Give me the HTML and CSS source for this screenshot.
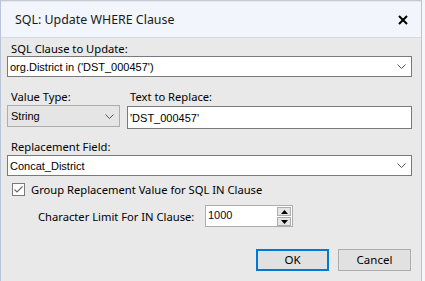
FILE: index.html
```html
<!DOCTYPE html>
<html>
<head>
<meta charset="utf-8">
<link rel="stylesheet" href="styles.css">
</head>
<body>
<div class="window">
  <div class="titlebar">
    <span class="title">SQL: Update WHERE Clause</span>
    <svg class="close" width="10" height="10" viewBox="0 0 10 10"><path d="M1 1 L9 9 M9 1 L1 9" stroke="#000" stroke-width="2"/></svg>
  </div>
  <div class="content">
    <div class="label l1">SQL Clause to Update:</div>
    <div class="combo white">
      <span class="val">org.District in ('DST_000457')</span>
      <svg class="chev" width="9" height="5" viewBox="0 0 9 5"><path d="M0.5 0.5 L4.5 4.5 L8.5 0.5" fill="none" stroke="#555" stroke-width="1"/></svg>
    </div>
    <div class="row2">
      <div class="col-type">
        <div class="label">Value Type:</div>
        <div class="combo gray">
          <span class="val">String</span>
          <svg class="chev" width="9" height="5" viewBox="0 0 9 5"><path d="M0.5 0.5 L4.5 4.5 L8.5 0.5" fill="none" stroke="#555" stroke-width="1"/></svg>
        </div>
      </div>
      <div class="col-text">
        <div class="label">Text to Replace:</div>
        <div class="textbox"><span class="val">'DST_000457'</span></div>
      </div>
    </div>
    <div class="label l3">Replacement Field:</div>
    <div class="combo white">
      <span class="val">Concat_District</span>
      <svg class="chev" width="9" height="5" viewBox="0 0 9 5"><path d="M0.5 0.5 L4.5 4.5 L8.5 0.5" fill="none" stroke="#555" stroke-width="1"/></svg>
    </div>
    <div class="checkrow">
      <svg class="checkbox" width="13" height="13" viewBox="0 0 13 13"><rect x="0.5" y="0.5" width="12" height="12" fill="#fff" stroke="#7a7a7a"/><path d="M2.5 6.5 L5 9 L10.5 3.5" fill="none" stroke="#6a6a6a" stroke-width="1.2"/></svg>
      <span class="label">Group Replacement Value for SQL IN Clause</span>
    </div>
    <div class="limitrow">
      <span class="label">Character Limit For IN Clause:</span>
      <div class="numeric">
        <span class="val num">1000</span>
        <div class="spin">
          <div class="sbtn"><svg width="7" height="4" viewBox="0 0 7 4"><path d="M0 4 L3.5 0 L7 4 Z" fill="#000"/></svg></div>
          <div class="sbtn"><svg width="7" height="4" viewBox="0 0 7 4"><path d="M0 0 L3.5 4 L7 0 Z" fill="#000"/></svg></div>
        </div>
      </div>
    </div>
    <div class="buttons">
      <div class="btn ok">OK</div>
      <div class="btn">Cancel</div>
    </div>
  </div>
</div>
</body>
</html>
```
FILE: styles.css
```css
html, body {
  margin: 0;
  padding: 0;
}
body {
  width: 425px;
  height: 281px;
  background: #f4f6f9;
  overflow: hidden;
  font-family: "Noto Sans", "Open Sans", sans-serif;
}
.window {
  width: 420px;
  height: 280px;
  border-top: 1px solid #c6c9ce;
  border-left: 1px solid #b9c4d6;
  border-right: 1px solid #b9c4d6;
  background: #e9e9e9;
}
.titlebar {
  height: 35px;
  background: #f2f5fb;
  border-top: 1px solid #e3e8f0;
  border-bottom: 1px solid #d6dbe3;
  display: flex;
  align-items: center;
  justify-content: space-between;
  padding: 0 13px 0 14px;
}
.title {
  font-size: 12.4px;
  color: #1a1a1a;
}
.close {
  display: block;
}
.content {
  padding: 3px 9px 0 6px;
}
.label {
  font-size: 11.2px;
  color: #000;
  line-height: 15px;
  padding-left: 4px;
}
.l1 { height: 15px; margin-bottom: 0; }
.val {
  font-family: "Liberation Sans", Arial, sans-serif;
  font-size: 11px;
  color: #000;
}
.combo {
  height: 19px;
  border: 1px solid #7a7a7a;
  display: flex;
  align-items: center;
  justify-content: space-between;
  padding: 0 5px 0 2px;
}
.combo.white { background: #fff; }
.combo.gray {
  background: #e5e5e5;
  border-color: #adadad;
  height: 20px;
  padding-left: 3px;
}
.chev { display: block; }
.row2 {
  display: flex;
  gap: 7px;
  margin-top: 12px;
}
.col-type { width: 113px; }
.col-type .label { margin-bottom: 1px; }
.col-text { flex: 1; }
.col-text .label { padding-left: 3px; margin-bottom: 2px; }
.textbox {
  height: 21px;
  border: 1px solid #7a7a7a;
  background: #fff;
  display: flex;
  align-items: center;
  padding-left: 2px;
}
.l3 { margin-top: 10px; margin-bottom: 1px; }
.checkrow {
  display: flex;
  align-items: center;
  margin-top: 6px;
  padding-left: 5px;
}
.checkrow .label { padding-left: 6px; }
.checkbox { display: block; }
.limitrow {
  display: flex;
  align-items: center;
  margin-top: 8px;
  padding-left: 27px;
}
.limitrow .label { width: 167px; flex-shrink: 0; }
.numeric {
  width: 83px;
  height: 20px;
  border: 1px solid #adadad;
  background: #fff;
  display: flex;
  justify-content: space-between;
  padding: 0 1px 0 2px;
}
.num { line-height: 18px; color: #0a0a2a; }
.spin {
  width: 14px;
  display: flex;
  flex-direction: column;
  gap: 1px;
  padding-top: 1px;
}
.sbtn {
  height: 8px;
  border: 1px solid #adadad;
  background: #e5e5e5;
  display: flex;
  align-items: center;
  justify-content: center;
}
.sbtn svg { display: block; }
.buttons {
  display: flex;
  justify-content: flex-end;
  gap: 9px;
  margin-top: 22px;
  padding-right: 1px;
}
.btn {
  width: 71px;
  height: 20px;
  border: 1px solid #adadad;
  background: #e1e1e1;
  font-size: 11.5px;
  line-height: 20px;
  text-align: center;
  color: #000;
  box-sizing: content-box;
}
.btn.ok {
  border: 2px solid #0078d7;
  width: 69px;
  height: 18px;
  line-height: 18px;
}
```
